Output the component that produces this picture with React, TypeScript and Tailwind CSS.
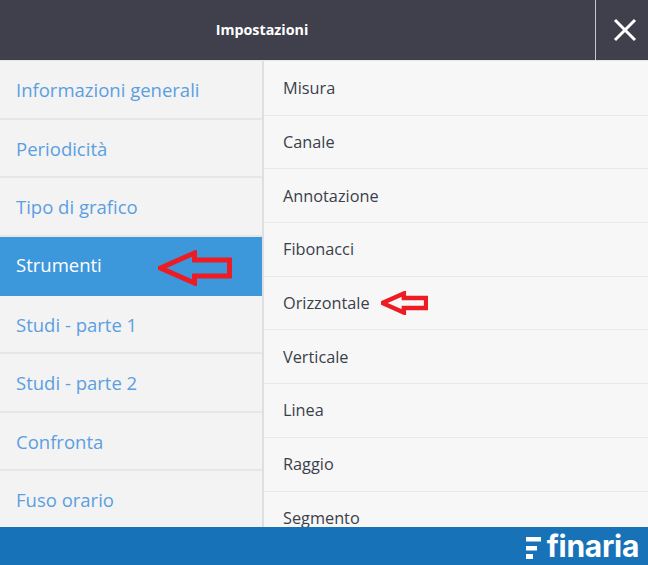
import React from "react";

const left = ["Informazioni generali", "Periodicità", "Tipo di grafico", "Strumenti", "Studi - parte 1", "Studi - parte 2", "Confronta", "Fuso orario"];
const right = ["Misura", "Canale", "Annotazione", "Fibonacci", "Orizzontale", "Verticale", "Linea", "Raggio", "Segmento"];

function Arrow({ width, height, strokeWidth, className }: { width: number; height: number; strokeWidth: number; className: string }) {
  return (
    <svg width={width} height={height} viewBox="0 0 74 36" className={className} fill="none">
      <path d="M2 18 L36 3 L36 10 L71 10 L71 26 L36 26 L36 33 Z" stroke="#ed1c24" strokeWidth={strokeWidth} strokeLinejoin="miter" />
    </svg>
  );
}

export default function App() {
  return (
    <div className="relative flex h-[565px] w-[648px] flex-col overflow-hidden bg-[#f7f7f7] font-['Open_Sans',sans-serif]">
      <header className="flex h-[60px] shrink-0 items-center bg-[#3f404c]">
        <div className="flex-1 pr-[71px] text-center text-[14.3px] font-bold text-white">Impostazioni</div>
        <button className="flex h-[60px] w-[53px] items-center justify-center border-l border-[#c9c9cc] pl-[5px]">
          <svg width="24" height="24" viewBox="0 0 24 24" fill="none" stroke="white" strokeWidth="3">
            <path d="M2 2 L22 22 M22 2 L2 22" />
          </svg>
        </button>
      </header>
      <div className="flex min-h-0 flex-1 border-t border-[#e6e6e6]">
        <nav className="w-[264px] shrink-0 overflow-hidden border-r-2 border-[#dfdfdf] bg-[#f3f3f3]">
          {left.map((t) =>
            t === "Strumenti" ? (
              <div key={t} className="relative flex h-[59px] items-center bg-[#3d97db] pb-[2px] pl-[16px] text-[18.5px] text-white">
                {t}
              </div>
            ) : (
              <div key={t} className="flex h-[58.5px] items-center border-b-2 border-[#e6e6e6] pl-[16px] pt-[2px] text-[18.5px] text-[#5b9fe0]">
                {t}
              </div>
            )
          )}
        </nav>
        <div className="min-w-0 flex-1 overflow-hidden pt-[1px]">
          {right.map((t) => (
            <div key={t} className="flex h-[53.7px] shrink-0 items-center border-b border-[#e9e9e9] pl-[19px] text-[16.3px] text-[#3b3f4a]">
              {t}
            </div>
          ))}
        </div>
      </div>
      <footer className="flex h-[38px] shrink-0 items-center justify-end gap-[6px] bg-[#1872b8] pr-[9px]">
        <svg width="15" height="22" viewBox="0 0 15 22" fill="white" className="mt-[3px]">
          <rect x="0" y="0" width="15" height="4.5" />
          <rect x="0" y="9" width="11" height="4.5" />
          <rect x="0" y="17" width="7" height="5" />
        </svg>
        <span className="font-['Inter',sans-serif] text-[30px] leading-none font-bold tracking-[-0.3px] text-white">finaria</span>
      </footer>
      <Arrow width={75} height={36} strokeWidth={5} className="absolute left-[158px] top-[250px]" />
      <Arrow width={47} height={24} strokeWidth={7} className="absolute left-[381px] top-[291px]" />
    </div>
  );
}
